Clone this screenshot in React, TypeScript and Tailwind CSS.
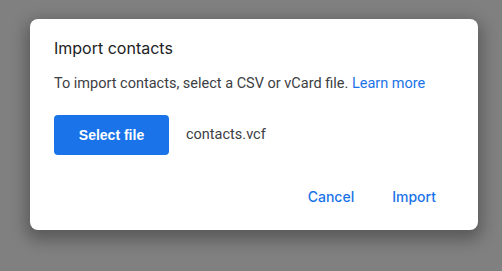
export default function App() {
  return (
    <div
      className="w-[502px] h-[271px] bg-[#808080] pl-[30px] pt-[19px]"
      style={{ fontFamily: 'Roboto, "Liberation Sans", sans-serif' }}
    >
      <div className="w-[448px] h-[211px] bg-white rounded-[8px] shadow-[0_6px_16px_4px_rgba(0,0,0,0.3)] px-6 pt-[17px]">
        <h2 className="font-['Inter',sans-serif] text-[16px] leading-[24px] font-normal text-[#202124]">
          Import contacts
        </h2>
        <p className="mt-[14px] text-[14.5px] leading-[20px] text-[#3c4043]">
          To import contacts, select a CSV or vCard file.{' '}
          <a className="text-[#1a73e8]">Learn more</a>
        </p>
        <div className="mt-[21px] flex items-center gap-[17px]">
          <button className="w-[115px] h-[40px] rounded-[4px] bg-[#1a73e8] text-white text-[14px] font-bold font-['Liberation_Sans',sans-serif]">
            Select file
          </button>
          <span className="text-[14.5px] text-[#3c4043]">contacts.vcf</span>
        </div>
        <div className="mt-[31px] flex justify-end gap-[38px] pr-[18px]">
          <button className="font-['Inter',sans-serif] text-[14px] font-medium text-[#1a73e8]">Cancel</button>
          <button className="font-['Inter',sans-serif] text-[14px] font-medium text-[#1a73e8]">Import</button>
        </div>
      </div>
    </div>
  )
}
